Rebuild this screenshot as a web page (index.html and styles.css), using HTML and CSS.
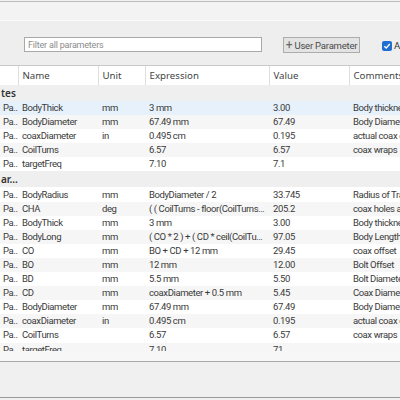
FILE: index.html
```html
<!DOCTYPE html>
<html lang="en">
<head>
  <meta charset="UTF-8">
  <title>Parameters</title>
  <link rel="stylesheet" href="styles.css">
</head>
<body>

  <!-- Title strip -->
  <div class="titlebar"></div>

  <!-- Toolbar -->
  <div class="toolbar">
    <input class="filter" type="text" placeholder="Filter all parameters">
    <button class="add-btn"><span class="plus">+</span> User Parameter</button>
    <label class="auto"><span class="check"><svg viewBox="0 0 10 10" width="10" height="10"><path d="M2.3 5.2 L4.2 7 L7.8 3" fill="none" stroke="#fff" stroke-width="1.3"/></svg></span>Auto</label>
  </div>

  <!-- Parameter grid -->
  <div class="grid-wrap">
    <table class="grid">
      <colgroup>
        <col class="c-type"><col class="c-name"><col class="c-unit"><col class="c-expr"><col class="c-value"><col class="c-comment">
      </colgroup>
      <thead>
        <tr>
          <th></th><th>Name</th><th>Unit</th><th>Expression</th><th>Value</th><th>Comments</th>
        </tr>
      </thead>
      <tbody>
        <tr class="group"><td colspan="6">tes</td></tr>
        <tr class="selected"><td>Pa…</td><td>BodyThick</td><td>mm</td><td>3 mm</td><td>3.00</td><td>Body thickness</td></tr>
        <tr class="alt"><td>Pa…</td><td>BodyDiameter</td><td>mm</td><td>67.49 mm</td><td>67.49</td><td>Body Diameter</td></tr>
        <tr><td>Pa…</td><td>coaxDiameter</td><td>in</td><td>0.495 cm</td><td>0.195</td><td>actual coax diameter</td></tr>
        <tr class="alt"><td>Pa…</td><td>CoilTurns</td><td></td><td>6.57</td><td>6.57</td><td>coax wraps</td></tr>
        <tr><td>Pa…</td><td>targetFreq</td><td></td><td>7.10</td><td>7.1</td><td></td></tr>

        <tr class="group"><td colspan="6">ar…</td></tr>
        <tr><td>Pa…</td><td>BodyRadius</td><td>mm</td><td>BodyDiameter / 2</td><td>33.745</td><td>Radius of Transformer</td></tr>
        <tr class="alt"><td>Pa…</td><td>CHA</td><td>deg</td><td>( ( CoilTurns - floor(CoilTurns) ) * 360 deg )</td><td>205.2</td><td>coax holes angle</td></tr>
        <tr><td>Pa…</td><td>BodyThick</td><td>mm</td><td>3 mm</td><td>3.00</td><td>Body thickness</td></tr>
        <tr class="alt"><td>Pa…</td><td>BodyLong</td><td>mm</td><td>( CO * 2 ) + ( CD * ceil(CoilTurns) )</td><td>97.05</td><td>Body Length</td></tr>
        <tr><td>Pa…</td><td>CO</td><td>mm</td><td>BO + CD + 12 mm</td><td>29.45</td><td>coax offset</td></tr>
        <tr class="alt"><td>Pa…</td><td>BO</td><td>mm</td><td>12 mm</td><td>12.00</td><td>Bolt Offset</td></tr>
        <tr><td>Pa…</td><td>BD</td><td>mm</td><td>5.5 mm</td><td>5.50</td><td>Bolt Diameter</td></tr>
        <tr class="alt"><td>Pa…</td><td>CD</td><td>mm</td><td>coaxDiameter + 0.5 mm</td><td>5.45</td><td>Coax Diameter</td></tr>
        <tr><td>Pa…</td><td>BodyDiameter</td><td>mm</td><td>67.49 mm</td><td>67.49</td><td>Body Diameter</td></tr>
        <tr class="alt"><td>Pa…</td><td>coaxDiameter</td><td>in</td><td>0.495 cm</td><td>0.195</td><td>actual coax diameter</td></tr>
        <tr><td>Pa…</td><td>CoilTurns</td><td></td><td>6.57</td><td>6.57</td><td>coax wraps</td></tr>
        <tr class="alt"><td>Pa…</td><td>targetFreq</td><td></td><td>7.10</td><td>71</td><td></td></tr>
      </tbody>
    </table>
  </div>

  <!-- Scroll strip and footer -->
  <div class="hscroll"></div>
  <div class="footer"></div>

</body>
</html>
```

FILE: styles.css
```css
/* General Styles */
* {
  margin: 0;
  padding: 0;
  box-sizing: border-box;
}

body {
  width: 400px;
  height: 400px;
  overflow: hidden;
  background-color: #f0f0f0;
  font-family: "Roboto", sans-serif;
  color: #3a3a3a;
}

/* Title strip */
.titlebar {
  margin-top: 1px;
  height: 20px;
  border-top: 1px solid #bdbdbd;
  border-bottom: 1px solid #f9f9f9;
  background-color: #f3f3f3;
}

/* Toolbar */
.toolbar {
  height: 44px;
  display: flex;
  align-items: flex-start;
  padding: 16px 0 0 24px;
  background-color: #eeeeee;
  white-space: nowrap;
}

.toolbar > * {
  flex-shrink: 0;
}

.filter {
  width: 238px;
  height: 15px;
  border: 1px solid #a9a9a9;
  background-color: #fff;
  padding: 0 3px;
  font-family: "Roboto", sans-serif;
  font-size: 9px;
  letter-spacing: -0.2px;
  outline: none;
}

.filter::placeholder {
  color: #8c8c8c;
}

.add-btn {
  margin-left: 21px;
  width: 77px;
  height: 16px;
  border: 1px solid #adadad;
  background-color: #e3e3e3;
  color: #4a4a4a;
  font-family: "Roboto", sans-serif;
  font-size: 9.5px;
  letter-spacing: -0.2px;
  line-height: 13px;
}

.add-btn .plus {
  font-size: 12px;
  color: #666;
}

.auto {
  margin-left: 22px;
  margin-top: 3px;
  display: flex;
  align-items: center;
  font-family: "Roboto", sans-serif;
  font-size: 9.5px;
  color: #333;
}

.check {
  width: 10px;
  height: 10px;
  margin-right: 2px;
  border-radius: 2px;
  background-color: #1f6fd1;
  display: flex;
}

/* Parameter grid */
.grid-wrap {
  height: 286px;
  overflow: hidden;
  background-color: #fff;
  border-top: 1px solid #c9c9c9;
}

.grid {
  width: 470px;
  table-layout: fixed;
  border-collapse: collapse;
}

.c-type { width: 18px; }
.c-name { width: 80px; }
.c-unit { width: 47px; }
.c-expr { width: 124px; }
.c-value { width: 80px; }
.c-comment { width: 121px; }

.grid th {
  height: 19px;
  padding: 0 4px;
  text-align: left;
  font-family: "Noto Sans", "Open Sans", sans-serif;
  font-size: 9.7px;
  font-weight: normal;
  color: #444;
  background-color: #fff;
  border-left: 1px solid #dedede;
}

.grid th:first-child {
  border-left: none;
}

.grid td {
  height: 14.1px;
  padding: 0 4px;
  font-size: 9.5px;
  letter-spacing: -0.4px;
  line-height: 14px;
  white-space: nowrap;
  overflow: hidden;
  text-overflow: ellipsis;
}

.grid td:first-child {
  padding: 0 0 0 3px;
  text-overflow: clip;
}

.grid tr.alt td {
  background-color: #f6f6f6;
}

.grid tr.selected td {
  background-color: #e6f1fb;
}

.grid tr.group td {
  height: 16px;
  padding: 0 1px;
  background-color: #efefef;
  font-family: "Noto Sans", "Open Sans", sans-serif;
  font-size: 10px;
  letter-spacing: 0;
  font-weight: 600;
  color: #333;
}

/* Scroll strip and footer */
.hscroll {
  height: 10px;
  background-color: #f7f7f7;
}

.footer {
  height: 37px;
  border-top: 1px solid #a9a9a9;
  border-bottom: 1px solid #9a9a9a;
  background-color: #f0f0f0;
}
```
